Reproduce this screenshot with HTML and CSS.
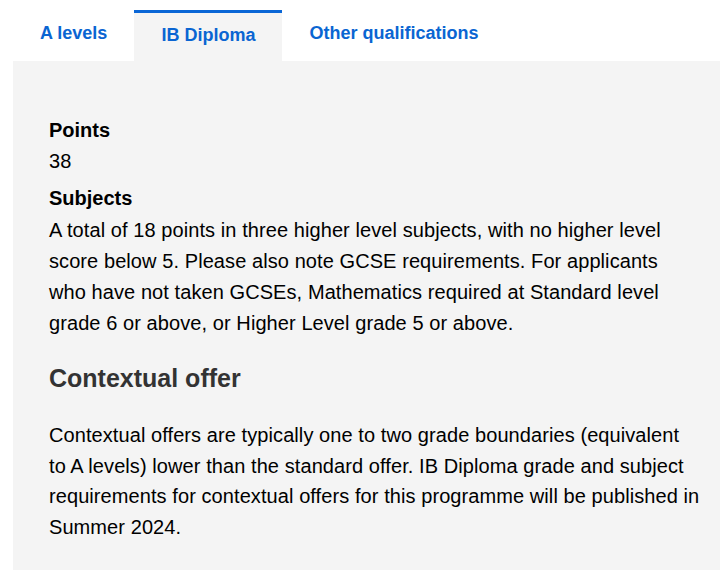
FILE: index.html
```html
<!DOCTYPE html>
<html lang="en">
<head>
<meta charset="utf-8">
<title>Entry requirements</title>
<link rel="stylesheet" href="styles.css">
</head>
<body>
<div class="wrap">
  <div class="tabs" role="tablist">
    <a class="tab" href="#" role="tab">A levels</a>
    <a class="tab tab-active" href="#" role="tab">IB Diploma</a>
    <a class="tab" href="#" role="tab">Other qualifications</a>
  </div>
  <div class="panel" role="tabpanel">
    <dl class="reqs">
      <dt class="req-term">Points</dt>
      <dd class="req-value">38</dd>
      <dt class="req-term req-term-next">Subjects</dt>
      <dd class="req-value req-value-text">A total of 18 points in three higher level subjects, with no higher level<br>score below 5. Please also note GCSE requirements. For applicants<br>who have not taken GCSEs, Mathematics required at Standard level<br>grade 6 or above, or Higher Level grade 5 or above.</dd>
    </dl>
    <h2 class="panel-heading">Contextual offer</h2>
    <p class="panel-text">Contextual offers are typically one to two grade boundaries (equivalent<br>to A levels) lower than the standard offer. IB Diploma grade and subject<br>requirements for contextual offers for this programme will be published in<br>Summer 2024.</p>
  </div>
</div>
</body>
</html>
```

FILE: styles.css
```css
html, body {
  margin: 0;
  padding: 0;
  background: #ffffff;
}

body {
  font-family: "Liberation Sans", Arial, sans-serif;
  color: #000000;
}

.wrap {
  padding: 0 7px 0 13px;
}

.tabs {
  display: flex;
  align-items: flex-end;
  height: 61px;
}

.tab {
  display: block;
  font-size: 18px;
  font-weight: bold;
  line-height: 20px;
  color: #0a65d2;
  text-decoration: none;
  padding: 10px 27px 18px;
}

.tab-active {
  background: #f4f4f4;
  border-top: 3px solid #0a66d6;
  padding: 12px 27px 16px;
}

.panel {
  background: #f4f4f4;
  padding: 54px 10px 26px 36px;
  height: 509px;
  box-sizing: border-box;
}

.reqs {
  margin: 0;
}

.req-term {
  font-size: 20px;
  font-weight: bold;
  line-height: 31px;
  margin: 0;
}

.req-term-next {
  margin-top: 7px;
}

.req-value {
  font-size: 20px;
  line-height: 30px;
  letter-spacing: 0.08px;
  margin: 0;
}

.req-value-text {
  margin-top: 1px;
  line-height: 31px;
}

.panel-heading {
  font-size: 25px;
  font-weight: bold;
  line-height: 30px;
  color: #333333;
  margin: 24px 0 0;
}

.panel-text {
  font-size: 20px;
  line-height: 30.67px;
  letter-spacing: 0.08px;
  margin: 27px 0 0;
}
```
